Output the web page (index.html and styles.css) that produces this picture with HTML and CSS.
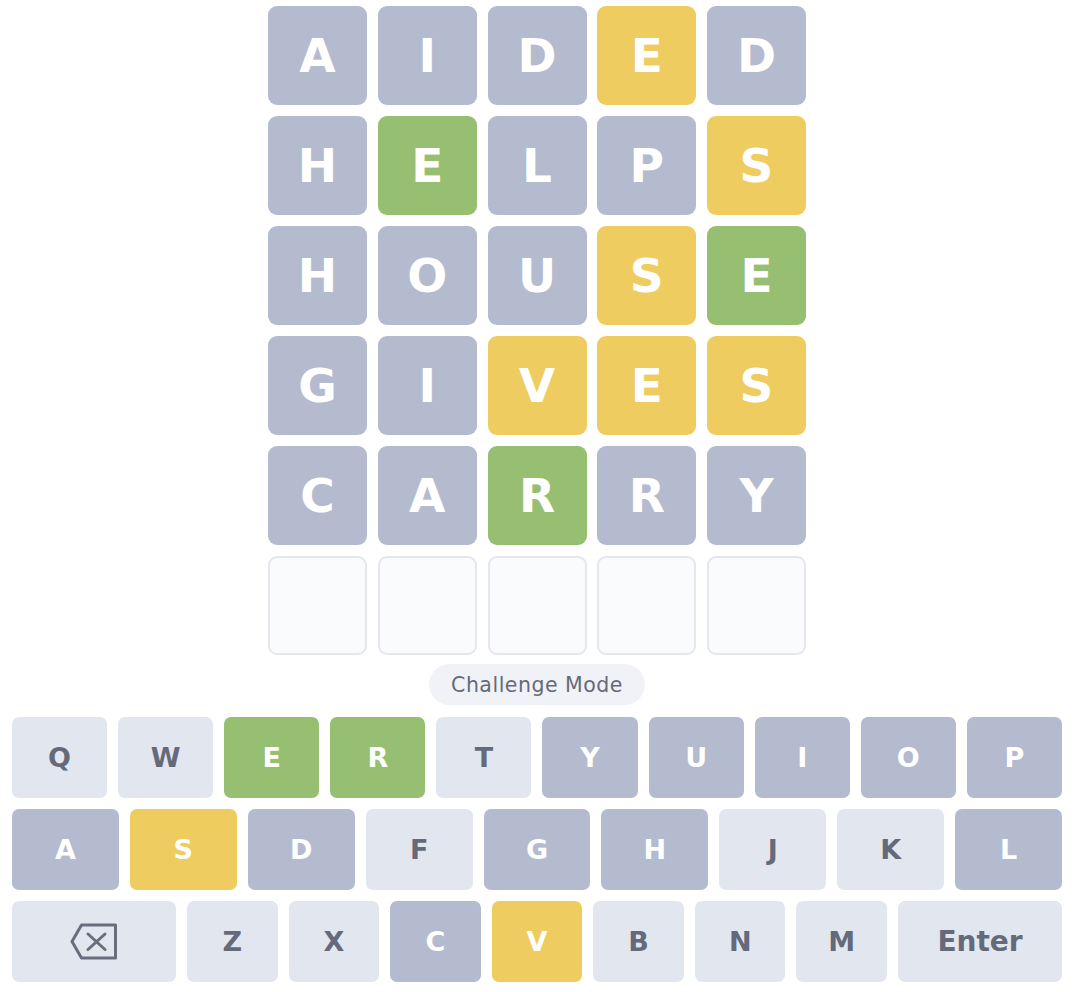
FILE: index.html
```html
<!DOCTYPE html>
<html>
<head>
<meta charset="utf-8">
<link rel="stylesheet" href="styles.css">
</head>
<body>
<main class="app">
  <div class="board">
    <div class="row">
      <div class="tile absent">A</div><div class="tile absent">I</div><div class="tile absent">D</div><div class="tile present">E</div><div class="tile absent">D</div>
    </div>
    <div class="row">
      <div class="tile absent">H</div><div class="tile correct">E</div><div class="tile absent">L</div><div class="tile absent">P</div><div class="tile present">S</div>
    </div>
    <div class="row">
      <div class="tile absent">H</div><div class="tile absent">O</div><div class="tile absent">U</div><div class="tile present">S</div><div class="tile correct">E</div>
    </div>
    <div class="row">
      <div class="tile absent">G</div><div class="tile absent">I</div><div class="tile present">V</div><div class="tile present">E</div><div class="tile present">S</div>
    </div>
    <div class="row">
      <div class="tile absent">C</div><div class="tile absent">A</div><div class="tile correct">R</div><div class="tile absent">R</div><div class="tile absent">Y</div>
    </div>
    <div class="row">
      <div class="tile empty"></div><div class="tile empty"></div><div class="tile empty"></div><div class="tile empty"></div><div class="tile empty"></div>
    </div>
  </div>

  <div class="mode"><span class="pill">Challenge Mode</span></div>

  <div class="keyboard">
    <div class="krow">
      <button class="key">Q</button><button class="key">W</button><button class="key correct">E</button><button class="key correct">R</button><button class="key">T</button><button class="key absent">Y</button><button class="key absent">U</button><button class="key absent">I</button><button class="key absent">O</button><button class="key absent">P</button>
    </div>
    <div class="krow">
      <button class="key absent">A</button><button class="key present">S</button><button class="key absent">D</button><button class="key">F</button><button class="key absent">G</button><button class="key absent">H</button><button class="key">J</button><button class="key">K</button><button class="key absent">L</button>
    </div>
    <div class="krow">
      <button class="key wide" aria-label="Backspace">
        <svg width="48" height="37" viewBox="0 0 48 37" fill="none" stroke="#686e7e" stroke-width="3" stroke-linejoin="round" stroke-linecap="round">
          <path d="M11.5 2 H45.5 V35 H11.5 L2 18.5 Z"/>
          <path d="M18 11 L35 26.5 M35 11 L18 26.5"/>
        </svg>
      </button>
      <button class="key">Z</button><button class="key">X</button><button class="key absent">C</button><button class="key present">V</button><button class="key">B</button><button class="key">N</button><button class="key">M</button><button class="key wide">Enter</button>
    </div>
  </div>
</main>
</body>
</html>
```

FILE: styles.css
```css
* { box-sizing: border-box; }
html, body {
  margin: 0;
  padding: 0;
  background: #ffffff;
  font-family: "DejaVu Sans", "Liberation Sans", sans-serif;
}
.app {
  width: 1074px;
  padding-top: 6px;
  display: flex;
  flex-direction: column;
  align-items: center;
}
.board {
  display: flex;
  flex-direction: column;
  gap: 11px;
}
.row {
  display: flex;
  gap: 10.75px;
}
.tile {
  width: 99px;
  height: 99px;
  border-radius: 9px;
  display: flex;
  align-items: center;
  justify-content: center;
  color: #ffffff;
  font-weight: 700;
  font-size: 47px;
  line-height: 1;
}
.tile.absent { background: #b4bbce; }
.tile.present { background: #efcc5f; }
.tile.correct { background: #97bf71; }
.tile.empty {
  background: #fafbfd;
  border: 2.5px solid #e5e7ec;
}
.mode {
  margin-top: 9px;
  display: flex;
  justify-content: center;
}
.pill {
  display: inline-flex;
  align-items: center;
  height: 41px;
  padding: 0 22px;
  border-radius: 21px;
  background: #f1f2f7;
  color: #656a7a;
  font-size: 20.5px;
  letter-spacing: 0.5px;
}
.keyboard {
  width: 1074px;
  padding: 12px 12px 0;
  display: flex;
  flex-direction: column;
  gap: 11px;
}
.krow {
  display: flex;
  gap: 11px;
}
.key {
  flex: 1 1 0;
  height: 81px;
  border: none;
  border-radius: 7px;
  background: #e2e6ef;
  color: #646a7a;
  font-family: "DejaVu Sans", "Liberation Sans", sans-serif;
  font-weight: 700;
  font-size: 27px;
  display: flex;
  align-items: center;
  justify-content: center;
  padding: 0;
  margin: 0;
}
.key.wide {
  flex: 0 0 164px;
  font-size: 28px;
}
.key.absent { background: #b4bbce; color: #ffffff; }
.key.present { background: #efcc5f; color: #ffffff; }
.key.correct { background: #97bf71; color: #ffffff; }
```
